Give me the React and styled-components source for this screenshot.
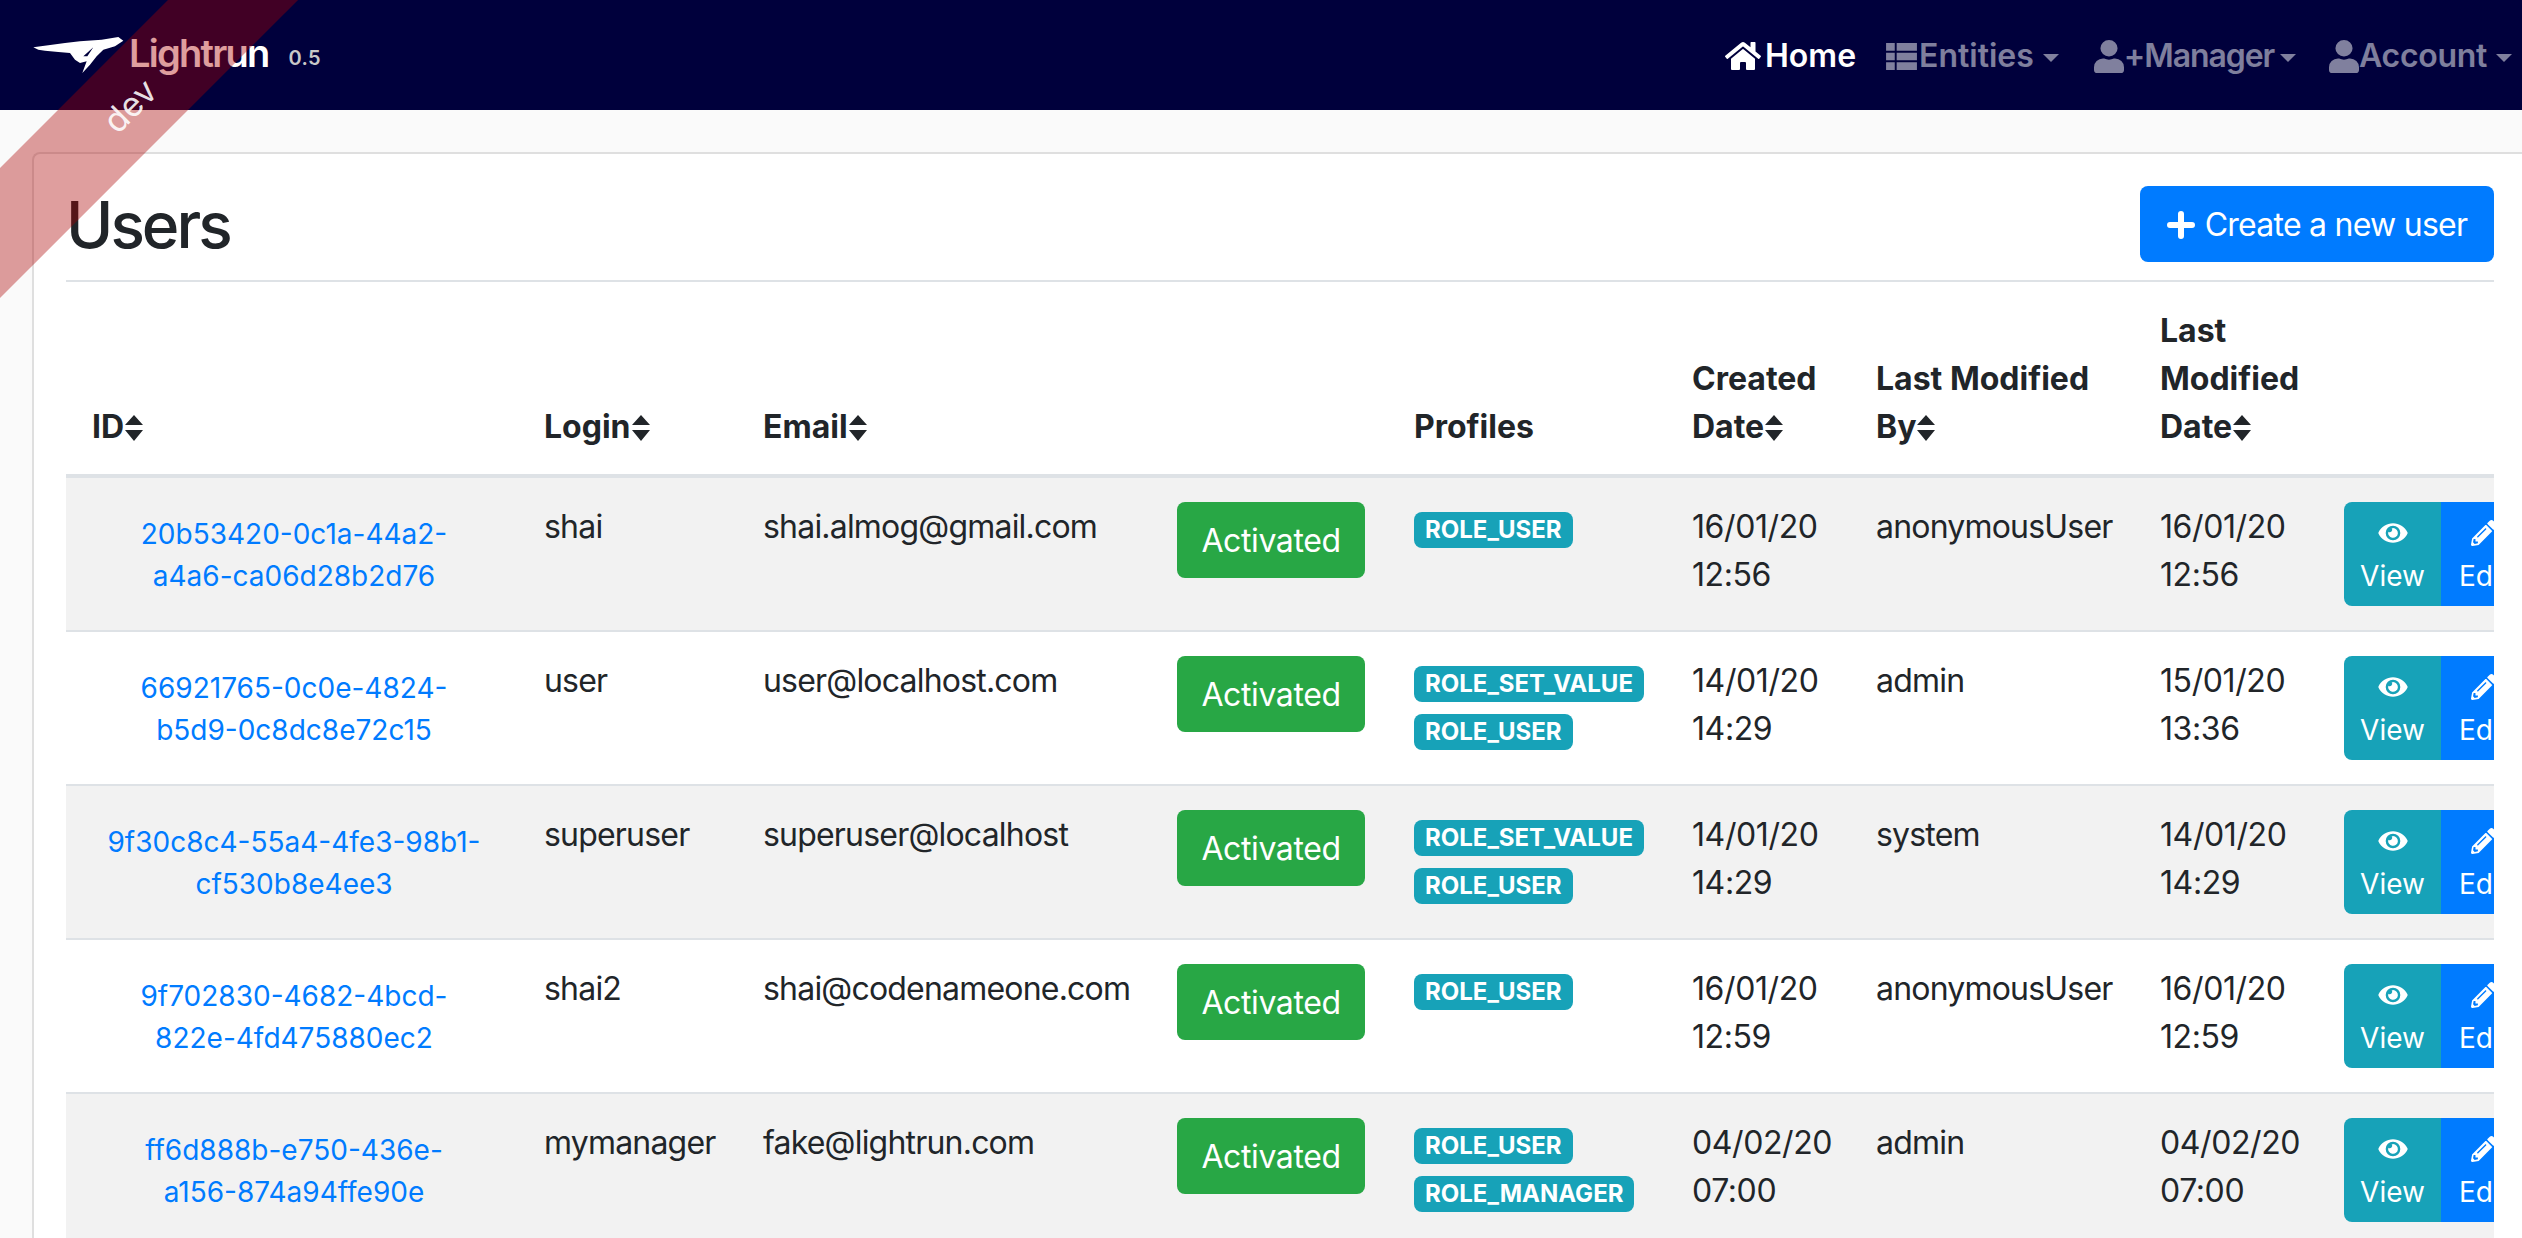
import React from "react";
import styled, { createGlobalStyle } from "styled-components";

const Global = createGlobalStyle`
  html, body { margin: 0; padding: 0; background: #fafafa; height: 1238px; overflow: hidden; }
  body { font-family: Inter, "Liberation Sans", sans-serif; font-size: 32px; line-height: 48px; color: #212529; }
  * { box-sizing: border-box; }
`;

const Page = styled.div`position: relative; width: 2522px; height: 1238px; overflow: hidden;`;
const Navbar = styled.nav`
  height: 110px; background: #00003c; display: flex; align-items: center; justify-content: space-between;
`;
const Brand = styled.div`display: flex; align-items: center; padding-left: 33px;`;
const BrandName = styled.span`
  font-size: 38px; font-weight: 600; color: #fff; line-height: 40px; margin-left: 4px;
  margin-top: -5px; letter-spacing: -1.75px;
`;
const Version = styled.span`
  font-size: 20px; font-weight: 600; color: #c8c8c8; margin-left: 20px; margin-top: 5px; letter-spacing: 0.4px;
`;
const NavItems = styled.div`display: flex; align-items: center; padding: 2px 10px 0 0;`;
const NavItem = styled.div`
  display: flex; align-items: center; font-weight: 600; font-size: 32px; margin-left: ${p => p.$gap}px;
  color: ${p => (p.$active ? "#fff" : "rgba(255,255,255,0.5)")};
  svg { fill: currentColor; margin-right: ${p => p.$iconGap}px; }
`;
const NavLabel = styled.span`letter-spacing: ${p => p.$ls || 0}px;`;
const Caret = styled.span`
  display: inline-block; margin-left: ${p => p.$ml || 9}px; margin-top: 4px; border-top: 8px solid currentColor;
  border-left: 8px solid transparent; border-right: 8px solid transparent;
`;
const Content = styled.main`padding: 42px 0 0 32px;`;
const Card = styled.section`
  background: #fff; border: 2px solid #dfdfdf; border-right: none; border-radius: 8px 0 0 0;
  padding: 32px 28px 0 32px; height: 1200px;
`;
const Header = styled.div`
  display: flex; justify-content: space-between; align-items: flex-start;
  border-bottom: 2px solid #dee2e6; height: 96px;
`;
const Title = styled.h2`
  margin: 0; font-size: 64px; line-height: 77px; font-weight: 500; letter-spacing: -3px;
`;
const CreateButton = styled.button`
  width: 354px; height: 76px; border: 0; border-radius: 8px; background: #007bff; color: #fff;
  font: 400 32px/48px Inter, sans-serif; letter-spacing: -0.75px; display: flex; align-items: center; justify-content: center;
  gap: 10px; padding-top: 2px;
`;
const TableWrap = styled.div`overflow: hidden; width: 2428px;`;
const Table = styled.table`
  border-collapse: collapse; table-layout: fixed; width: 2500px;
`;
const Th = styled.th`
  text-align: left; vertical-align: bottom; font-weight: 700; padding: 25px 22px 23px 26px; line-height: 48px;
  border-bottom: 4px solid #dee2e6;
  width: ${p => p.$w}px;
`;
const Row = styled.tr`background: ${p => (p.$odd ? "#f2f2f2" : "#fff")};`;
const Td = styled.td`
  vertical-align: top; padding: ${p => (p.$text ? "25px" : "24px")} 22px 24px 26px;
  border-top: ${p => (p.$first ? "0" : "2px solid #dee2e6")};
  letter-spacing: ${p => (p.$date ? "-0.4px" : "-0.8px")};
`;
const IdLink = styled.a`
  color: #007bff; display: block; padding-top: 11px; text-align: center;
  font-size: 28px; line-height: 42px; letter-spacing: 0; white-space: nowrap;
`;
const Activated = styled.span`
  display: inline-block; width: 188px; height: 76px; background: #28a745; color: #fff; border-radius: 8px;
  line-height: 78px; text-align: center; letter-spacing: -0.4px;
`;
const Badges = styled.div`display: flex; flex-direction: column; align-items: flex-start; gap: 12px; padding-top: 10px; letter-spacing: 0;`;
const Badge = styled.span`
  background: #17a2b8; color: #fff; font-size: 24px; font-weight: 700; line-height: 24px; padding: 6px 11px;
  border-radius: 8px; height: 36px; white-space: nowrap;
`;
const Actions = styled.div`display: flex;`;
const Action = styled.div`
  width: ${p => p.$w}px; height: 104px; background: ${p => p.$bg}; color: #fff; display: flex; flex-direction: column;
  align-items: center; justify-content: flex-start; flex: none; font-size: 28px; line-height: 42px; letter-spacing: 0;
  padding-top: 18px; border-radius: ${p => p.$r};
  svg { fill: currentColor; display: block; height: 26px; margin-bottom: 9px; }
`;
const SortIcon = styled.svg`width: 20px; height: 26px; vertical-align: -3px; fill: currentColor;`;
const Ribbon = styled.div`
  position: absolute; left: -170px; top: 57px; width: 600px; height: 92px; background: rgba(170,0,0,0.38);
  transform: rotate(-45deg); color: rgba(255,255,255,0.9); font-size: 34px; line-height: 96px; text-align: center;
  padding-right: 4px; pointer-events: none;
`;

const Sort = () => (
  <SortIcon viewBox="0 0 20 26"><path d="M10 0l9 10H1zM10 26L1 15h18z" /></SortIcon>
);
const Head = ({ w, label, sort }) => (
  <Th $w={w}>{label.map((l, i) => <React.Fragment key={i}>{i > 0 && <br />}{l}</React.Fragment>)}{sort && <Sort />}</Th>
);

const rows = [
  [["20b53420-0c1a-44a2-", "a4a6-ca06d28b2d76"], "shai", "shai.almog@gmail.com", ["ROLE_USER"], "16/01/20 12:56", "anonymousUser", "16/01/20 12:56"],
  [["66921765-0c0e-4824-", "b5d9-0c8dc8e72c15"], "user", "user@localhost.com", ["ROLE_SET_VALUE", "ROLE_USER"], "14/01/20 14:29", "admin", "15/01/20 13:36"],
  [["9f30c8c4-55a4-4fe3-98b1-", "cf530b8e4ee3"], "superuser", "superuser@localhost", ["ROLE_SET_VALUE", "ROLE_USER"], "14/01/20 14:29", "system", "14/01/20 14:29"],
  [["9f702830-4682-4bcd-", "822e-4fd475880ec2"], "shai2", "shai@codenameone.com", ["ROLE_USER"], "16/01/20 12:59", "anonymousUser", "16/01/20 12:59"],
  [["ff6d888b-e750-436e-", "a156-874a94ffe90e"], "mymanager", "fake@lightrun.com", ["ROLE_USER", "ROLE_MANAGER"], "04/02/20 07:00", "admin", "04/02/20 07:00"],
];

const Eye = () => <svg width="32" viewBox="0 0 576 512"><path d="M572.5 241.4C518.3 135.6 410.9 64 288 64S57.700 135.600 3.500 241.400a32.400 32.400 0 0 0 0 29.200C57.700 376.400 165.100 448 288 448s230.300-71.600 284.500-177.400a32.400 32.400 0 0 0 0-29.200zM288 400a144 144 0 1 1 144-144 143.900 143.900 0 0 1-144 144zm0-240a95.300 95.300 0 0 0-25.300 3.800 47.900 47.900 0 0 1-66.900 66.900A95.800 95.800 0 1 0 288 160z" /></svg>;
const Pencil = () => <svg width="30" viewBox="0 0 512 512"><path d="M497.900 142.100l-46.100 46.100c-4.700 4.700-12.300 4.700-17 0l-111-111c-4.700-4.700-4.700-12.300 0-17l46.100-46.100c18.700-18.700 49.100-18.700 67.900 0l60.100 60.100c18.800 18.700 18.800 49.100 0 67.900zM284.200 99.800L21.600 362.400.4 483.900c-2.900 16.400 11.400 30.600 27.800 27.800l121.500-21.300 262.600-262.600c4.700-4.700 4.700-12.300 0-17l-111-111c-4.800-4.700-12.400-4.700-17.100 0zM124.100 339.900c-5.500-5.500-5.500-14.300 0-19.800l154-154c5.500-5.500 14.300-5.500 19.800 0s5.500 14.300 0 19.800l-154 154c-5.500 5.500-14.300 5.500-19.800 0zM88 424h48v36.300l-64.500 11.300-31.100-31.100L51.700 376H88v48z" /></svg>;
const User = () => <svg width="30" height="33" viewBox="0 0 448 512" preserveAspectRatio="none"><path d="M224 256A128 128 0 1 0 224 0a128 128 0 0 0 0 256zm89.600 32h-16.700a174.100 174.100 0 0 1-145.800 0h-16.700A134.400 134.400 0 0 0 0 422.400V464a48 48 0 0 0 48 48h352a48 48 0 0 0 48-48v-41.600A134.400 134.400 0 0 0 313.600 288z" /></svg>;

export default function App() {
  return (
    <Page>
      <Global />
      <Navbar>
        <Brand>
          <svg width="92" height="38" viewBox="24 24 276 114" fill="#fff" fillRule="evenodd"><path d="M25 58L70 52 120 45 165 40 230 35 280 27 295 38 270 55 235 65 215 85 195 110 172 135 185 100 165 105 150 95 135 75 100 72 60 68 40 65zM205 58L175 85 187 85z" /></svg>
          <BrandName>Lightrun</BrandName>
          <Version>0.5</Version>
        </Brand>
        <NavItems>
          <NavItem $active $gap={0} $iconGap={4}>
            <svg width="36" height="32" viewBox="0 0 576 512"><path d="M280.400 148.300L96 300.100V464a16 16 0 0 0 16 16l112.100-.3a16 16 0 0 0 15.900-16V368a16 16 0 0 1 16-16h64a16 16 0 0 1 16 16v95.600a16 16 0 0 0 16 16.100L464 480a16 16 0 0 0 16-16V300L295.700 148.300a12.200 12.200 0 0 0-15.300 0zM571.600 251.500L488 182.600V44.100a12 12 0 0 0-12-12h-56a12 12 0 0 0-12 12v72.600L318.500 43a48 48 0 0 0-61 0L4.300 251.500a12 12 0 0 0-1.600 16.900l25.500 31A12 12 0 0 0 45.200 301l235.200-193.700a12.200 12.200 0 0 1 15.300 0L530.900 301a12 12 0 0 0 16.900-1.600l25.500-31a12 12 0 0 0-1.700-16.900z" /></svg>
            <NavLabel>Home</NavLabel>
          </NavItem>
          <NavItem $gap={30} $iconGap={2}>
            <svg width="31" height="27" viewBox="0 0 512 448"><path d="M0 0h144v128H0zM0 160h144v128H0zM0 320h144v128H0zM176 0h336v128H176zM176 160h336v128H176zM176 320h336v128H176z" /></svg>
            <NavLabel>Entities</NavLabel><Caret />
          </NavItem>
          <NavItem $gap={35} $iconGap={0}>
            <User />
            <NavLabel $ls={-1.1}>+Manager</NavLabel><Caret $ml={6} />
          </NavItem>
          <NavItem $gap={33} $iconGap={0}>
            <User />
            <NavLabel $ls={-0.3}>Account</NavLabel><Caret />
          </NavItem>
        </NavItems>
      </Navbar>
      <Content>
        <Card>
          <Header>
            <Title>Users</Title>
            <CreateButton>
              <svg width="28" height="28" viewBox="0 0 28 28"><path d="M14 3v22M3 14h22" stroke="#fff" strokeWidth="6" strokeLinecap="round" /></svg>
              Create a new user
            </CreateButton>
          </Header>
          <TableWrap>
            <Table>
              <thead>
                <tr>
                  <Head w={452} label={["ID"]} sort />
                  <Head w={219} label={["Login"]} sort />
                  <Head w={414} label={["Email"]} sort />
                  <Head w={237} label={[""]} />
                  <Head w={278} label={["Profiles"]} />
                  <Head w={184} label={["Created", "Date"]} sort />
                  <Head w={284} label={["Last Modified", "By"]} sort />
                  <Head w={184} label={["Last", "Modified", "Date"]} sort />
                  <Head w={248} label={[""]} />
                </tr>
              </thead>
              <tbody>
                {rows.map((r, i) => (
                  <Row key={r[0][0]} $odd={i % 2 === 0}>
                    <Td $first={i === 0}><IdLink>{r[0][0]}<br />{r[0][1]}</IdLink></Td>
                    <Td $first={i === 0} $text>{r[1]}</Td>
                    <Td $first={i === 0} $text>{r[2]}</Td>
                    <Td $first={i === 0}><Activated>Activated</Activated></Td>
                    <Td $first={i === 0}><Badges>{r[3].map(b => <Badge key={b}>{b}</Badge>)}</Badges></Td>
                    <Td $first={i === 0} $date $text>{r[4]}</Td>
                    <Td $first={i === 0} $text>{r[5]}</Td>
                    <Td $first={i === 0} $date $text>{r[6]}</Td>
                    <Td $first={i === 0}>
                      <Actions>
                        <Action $w={97} $bg="#17a2b8" $r="8px 0 0 8px"><Eye />View</Action>
                        <Action $w={86} $bg="#007bff" $r="0"><Pencil />Edit</Action>
                      </Actions>
                    </Td>
                  </Row>
                ))}
              </tbody>
            </Table>
          </TableWrap>
        </Card>
      </Content>
      <Ribbon>dev</Ribbon>
    </Page>
  );
}
